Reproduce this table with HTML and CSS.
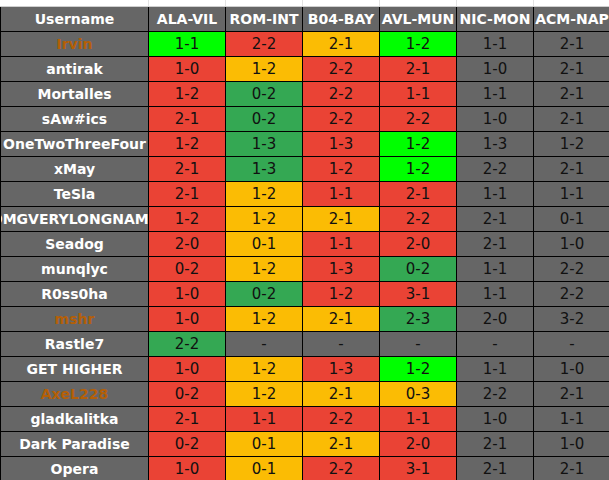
FILE: index.html
```html
<!DOCTYPE html>
<html>
<head>
<meta charset="utf-8">
<link rel="stylesheet" href="styles.css">
</head>
<body>
<div class="top">
  <span></span><span></span><span></span><span></span><span></span><span></span><span></span><span class="last"></span>
</div>
<div class="sheet">
  <div class="c h">Username</div><div class="c h">ALA-VIL</div><div class="c h">ROM-INT</div><div class="c h">B04-BAY</div><div class="c h">AVL-MUN</div><div class="c h">NIC-MON</div><div class="c h">ACM-NAP</div>

  <div class="c u o">Irvin</div><div class="c bg">1-1</div><div class="c r">2-2</div><div class="c y">2-1</div><div class="c bg">1-2</div><div class="c n">1-1</div><div class="c n">2-1</div>
  <div class="c u">antirak</div><div class="c r">1-0</div><div class="c y">1-2</div><div class="c r">2-2</div><div class="c r">2-1</div><div class="c n">1-0</div><div class="c n">2-1</div>
  <div class="c u">Mortalles</div><div class="c r">1-2</div><div class="c g">0-2</div><div class="c r">2-2</div><div class="c r">1-1</div><div class="c n">1-1</div><div class="c n">2-1</div>
  <div class="c u">sAw#ics</div><div class="c r">2-1</div><div class="c g">0-2</div><div class="c r">2-2</div><div class="c r">2-2</div><div class="c n">1-0</div><div class="c n">2-1</div>
  <div class="c u">OneTwoThreeFour</div><div class="c r">1-2</div><div class="c g">1-3</div><div class="c r">1-3</div><div class="c bg">1-2</div><div class="c n">1-3</div><div class="c n">1-2</div>
  <div class="c u">xMay</div><div class="c r">2-1</div><div class="c g">1-3</div><div class="c r">1-2</div><div class="c bg">1-2</div><div class="c n">2-2</div><div class="c n">2-1</div>
  <div class="c u">TeSla</div><div class="c r">2-1</div><div class="c y">1-2</div><div class="c r">1-1</div><div class="c r">2-1</div><div class="c n">1-1</div><div class="c n">1-1</div>
  <div class="c u">OMGVERYLONGNAME</div><div class="c r">1-2</div><div class="c y">1-2</div><div class="c y">2-1</div><div class="c r">2-2</div><div class="c n">2-1</div><div class="c n">0-1</div>
  <div class="c u">Seadog</div><div class="c r">2-0</div><div class="c y">0-1</div><div class="c r">1-1</div><div class="c r">2-0</div><div class="c n">2-1</div><div class="c n">1-0</div>
  <div class="c u">munqlyc</div><div class="c r">0-2</div><div class="c y">1-2</div><div class="c r">1-3</div><div class="c g">0-2</div><div class="c n">1-1</div><div class="c n">2-2</div>
  <div class="c u">R0ss0ha</div><div class="c r">1-0</div><div class="c g">0-2</div><div class="c r">1-2</div><div class="c r">3-1</div><div class="c n">1-1</div><div class="c n">2-2</div>
  <div class="c u o">mshr</div><div class="c r">1-0</div><div class="c y">1-2</div><div class="c y">2-1</div><div class="c g">2-3</div><div class="c n">2-0</div><div class="c n">3-2</div>
  <div class="c u">Rastle7</div><div class="c g">2-2</div><div class="c n">-</div><div class="c n">-</div><div class="c n">-</div><div class="c n">-</div><div class="c n">-</div>
  <div class="c u">GET HIGHER</div><div class="c r">1-0</div><div class="c y">1-2</div><div class="c r">1-3</div><div class="c bg">1-2</div><div class="c n">1-1</div><div class="c n">1-0</div>
  <div class="c u o">AxeL228</div><div class="c r">0-2</div><div class="c y">1-2</div><div class="c y">2-1</div><div class="c y">0-3</div><div class="c n">2-2</div><div class="c n">2-1</div>
  <div class="c u">gladkalitka</div><div class="c r">2-1</div><div class="c r">1-1</div><div class="c r">2-2</div><div class="c r">1-1</div><div class="c n">1-0</div><div class="c n">1-1</div>
  <div class="c u">Dark Paradise</div><div class="c r">0-2</div><div class="c y">0-1</div><div class="c y">2-1</div><div class="c r">2-0</div><div class="c n">2-1</div><div class="c n">1-0</div>
  <div class="c u">Opera</div><div class="c r">1-0</div><div class="c y">0-1</div><div class="c r">2-2</div><div class="c r">3-1</div><div class="c n">2-1</div><div class="c n">2-1</div>
</div>
</body>
</html>
```

FILE: styles.css
```css
html, body {
  margin: 0;
  padding: 0;
  background: #ffffff;
  overflow: hidden;
}

body {
  width: 609px;
  height: 480px;
  font-family: "DejaVu Sans", "Liberation Sans", sans-serif;
}

.top {
  display: grid;
  grid-template-columns: 148px repeat(6, 76px) 1px;
  column-gap: 1px;
  height: 6px;
  border-bottom: 1px solid #cfcfcf;
  background: #e2e2e2;
}

.top span {
  background: #ffffff;
}

.sheet {
  display: grid;
  grid-template-columns: 147px repeat(6, 76px);
  grid-auto-rows: 24px;
  gap: 1px;
  padding-left: 1px;
  width: 620px;
  background: #000000;
}

.c {
  display: flex;
  align-items: center;
  justify-content: center;
  overflow: hidden;
  white-space: nowrap;
  font-size: 15px;
  color: #111111;
}

.h {
  background: #666666;
  color: #ffffff;
  font-weight: bold;
  font-size: 14px;
}

.u {
  background: #666666;
  color: #ffffff;
  font-weight: bold;
  font-size: 14px;
}

.o {
  color: #b45f06;
}

.r { background: #ea4335; }
.y { background: #fbbc04; }
.g { background: #34a853; }
.bg { background: #00ff00; }
.n { background: #666666; }
```
